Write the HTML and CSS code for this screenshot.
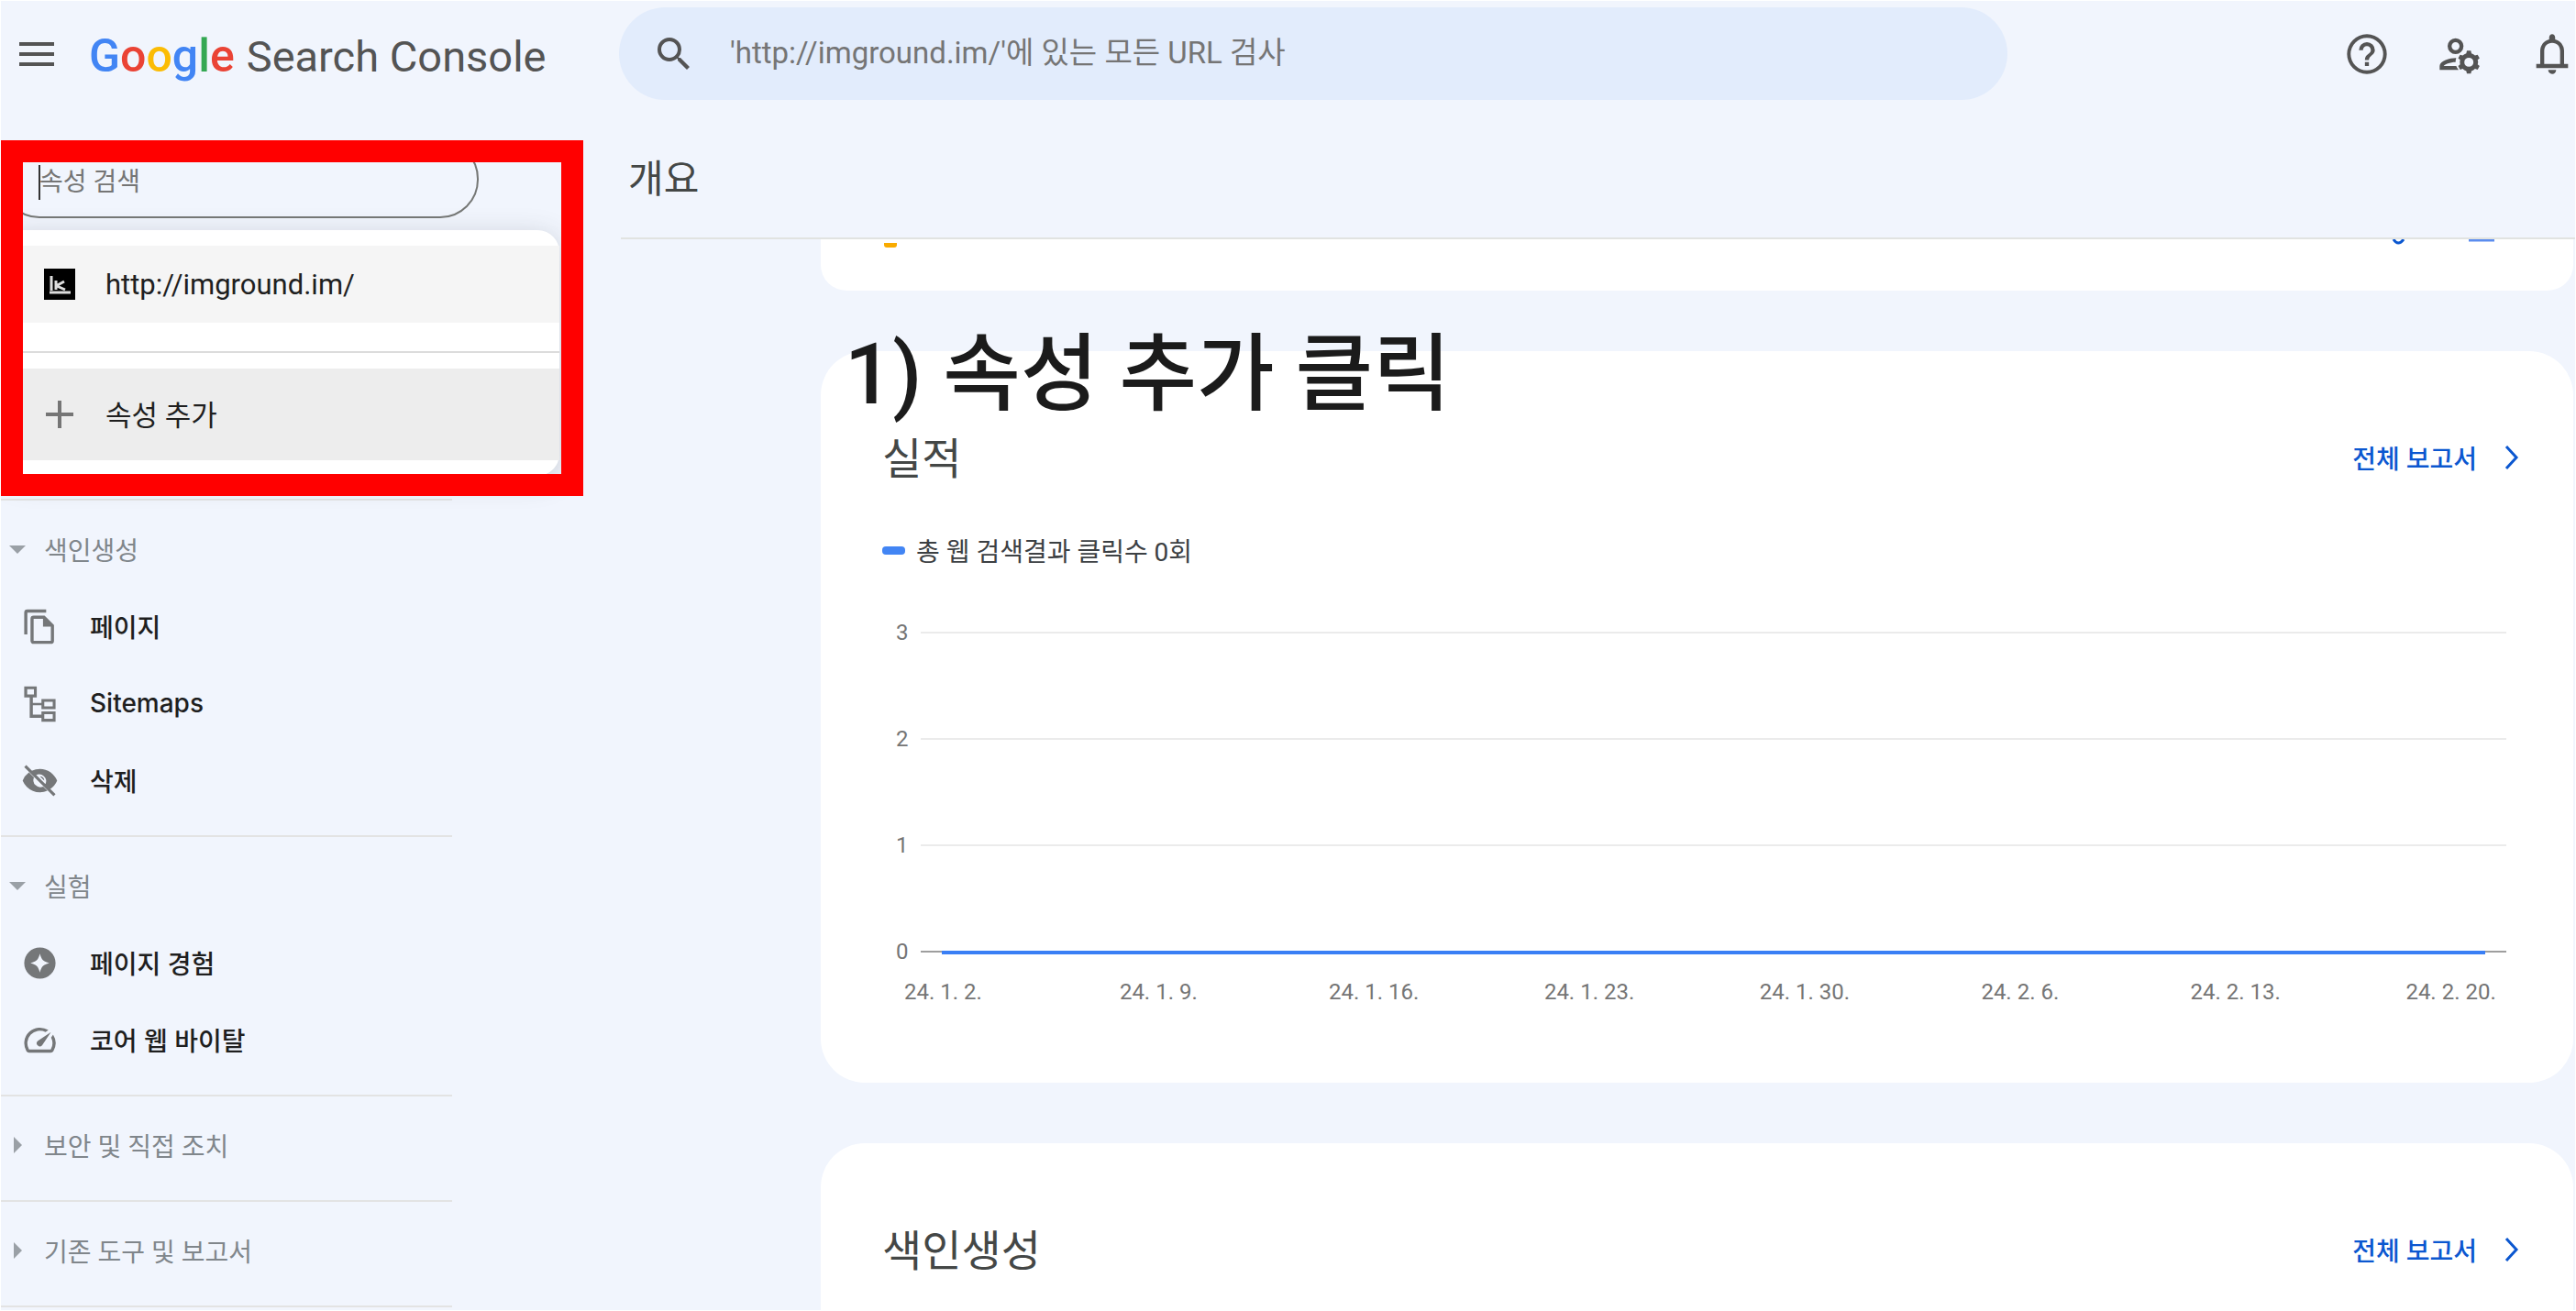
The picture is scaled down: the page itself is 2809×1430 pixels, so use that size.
FILE: index.html
```html
<!DOCTYPE html>
<html lang="ko">
<head>
  <meta charset="UTF-8" />
  <meta name="viewport" content="width=device-width, initial-scale=1.0"/>
  <title>Google Search Console</title>
  <link rel="stylesheet" href="styles.css">
</head>
<body>

<header>
  <button class="menu-btn" aria-label="메뉴">
    <svg viewBox="0 0 38 26"><path d="M0 2h38M0 13h38M0 24h38"/></svg>
  </button>
  <a class="logo" href="#"><span class="google"><span class="blue">G</span><span class="red">o</span><span class="yellow">o</span><span class="blue">g</span><span class="green">l</span><span class="red">e</span></span> <span class="product">Search Console</span></a>
  <div class="search">
    <svg class="icon" viewBox="0 0 24 24"><path d="M15.5 14h-.79l-.28-.27A6.47 6.47 0 0 0 16 9.5 6.5 6.5 0 1 0 9.5 16c1.61 0 3.09-.59 4.23-1.57l.27.28v.79l5 4.99L20.49 19l-4.99-5zm-6 0C7.01 14 5 11.99 5 9.5S7.01 5 9.5 5 14 7.01 14 9.5 11.99 14 9.5 14z"/></svg>
    <input type="text" aria-label="URL 검사" placeholder="'http://imground.im/'에 있는 모든 URL 검사">
  </div>
  <div class="actions">
    <button aria-label="도움말">
      <svg class="icon" viewBox="0 0 24 24"><path d="M11 18h2v-2h-2v2zm1-16a10 10 0 1 0 0 20 10 10 0 0 0 0-20zm0 18.2a8.2 8.2 0 1 1 0-16.4 8.2 8.2 0 0 1 0 16.4zM12 6a4 4 0 0 0-4 4h2a2 2 0 1 1 4 0c0 2-3 1.75-3 5h2c0-2.25 3-2.5 3-5a4 4 0 0 0-4-4z"/></svg>
    </button>
    <button aria-label="사용자 관리">
      <svg class="icon" viewBox="0 0 24 24">
        <path d="M10 4a4 4 0 1 0 0 8 4 4 0 0 0 0-8zm0 6a2 2 0 1 1 0-4 2 2 0 0 1 0 4zM4 18c.22-.72 3.31-2 6-2 0-.7.13-1.37.35-1.99C7.62 13.91 2 15.27 2 18v2h9.54a6 6 0 0 1-1.19-2H4z"/>
        <path d="M21.1 17.2c.3-.6.3-1.6 0-2.3l1-.8-1-1.8-1.3.4a3.600 3.600 0 0 0-1.800-1.100L17.700 10.300h-2l-.3 1.300c-.7.2-1.300.6-1.800 1.100l-1.300-.4-1 1.800 1 .8c-.2.8-.2 1.600 0 2.300l-1 .8 1 1.800 1.300-.4c.5.5 1.100.9 1.800 1.100l.3 1.300h2l.3-1.300c.7-.2 1.300-.6 1.800-1.100l1.300.4 1-1.800zm-4.400 1.200a2.300 2.300 0 1 1 0-4.600 2.300 2.300 0 0 1 0 4.600z" fill-rule="evenodd"/>
      </svg>
    </button>
    <button aria-label="알림">
      <svg class="icon" viewBox="0 0 24 24"><path d="M12 22a2 2 0 0 0 2-2h-4c0 1.100.9 2 2 2zm6-5v-6.500c0-2.900-1.800-5.200-4.500-5.900V3.700c0-.9-.7-1.700-1.500-1.700s-1.500.8-1.500 1.700v.9C7.800 5.300 6 7.600 6 10.500V17H4v2h16v-2h-2zM8 17v-6.500C8 8 9.500 6.300 12 6.300s4 1.700 4 4.200V17H8z"/></svg>
    </button>
  </div>
</header>

<div class="layout">
  <aside>
    <div class="picker">
      <div class="picker-input">
        <input type="text" aria-label="속성 검색" placeholder="속성 검색">
      </div>
      <div class="picker-menu">
        <button class="property">
          <svg viewBox="0 0 34 34"><rect width="34" height="34" fill="#000"/><path d="M8 8v16M13 13v10M13 19l9-5M14 19l9 4M6 26h23" fill="none" stroke="#ddd" stroke-width="3"/></svg>
          http://imground.im/
        </button>
        <button class="property add">
          <svg viewBox="0 0 34 34"><path d="M17 2v30M2 17h30" stroke="#757575" stroke-width="4"/></svg>
          <span>속성 추가</span>
        </button>
      </div>
      <div class="red-frame"></div>
    </div>

    <nav>
      <div class="group">
        <button class="group-title"><svg viewBox="0 0 18 18"><path d="M0 5h18l-9 9z"/></svg>색인생성</button>
        <a href="#"><svg class="icon" viewBox="0 0 24 24"><path d="M16 1H4a2 2 0 0 0-2 2v14h2V3h12V1zm-1 4H8a2 2 0 0 0-1.990 2L6 21c0 1.100.89 2 1.990 2H19a2 2 0 0 0 2-2V11l-6-6zM8 21V7h6v5h5v9H8z"/></svg>페이지</a>
        <a href="#"><svg class="icon" viewBox="0 0 24 24"><path d="M2 1h8v7H7.500v3.500H13V9h9v6.500h-9V13H7.500v6H13v-2h9v6.500h-9V21H5.500V8H2zM3.900 2.800v3.400h4.300V2.800zM14.800 10.800v3h5.400v-3zM14.800 18.700v3h5.400v-3z" fill-rule="evenodd"/></svg>Sitemaps</a>
        <a href="#"><svg class="icon" viewBox="0 0 24 24"><path d="M12 4.500c5 0 9.270 3.110 11 7.500a11.800 11.800 0 0 1-4.500 5.400l-3-3a4.500 4.500 0 0 0-6-6L6.800 5.700A12 12 0 0 1 12 4.500zM5 6.700 8.200 9.900a4.500 4.500 0 0 0 5.900 5.900l2.700 2.700A12 12 0 0 1 1 12a11.800 11.800 0 0 1 4-5.300zM2 3.300 3.300 2 22 20.700 20.700 22zM12 9.200a2.800 2.800 0 0 1 2.800 2.800z"/></svg>삭제</a>
      </div>
      <div class="group">
        <button class="group-title"><svg viewBox="0 0 18 18"><path d="M0 5h18l-9 9z"/></svg>실험</button>
        <a href="#"><svg class="icon" viewBox="0 0 24 24"><path d="M12 2a10 10 0 1 0 0 20 10 10 0 0 0 0-20zm0 16c-1-3.800-2.200-5-6-6 3.800-1 5-2.200 6-6 1 3.800 2.200 5 6 6-3.800 1-5 2.200-6 6z" fill-rule="evenodd"/></svg>페이지 경험</a>
        <a href="#"><svg class="icon" viewBox="0 0 24 24"><path d="m20.380 8.570-1.230 1.850a8 8 0 0 1-.22 7.580H5.070A8 8 0 0 1 15.580 6.850l1.850-1.230A10 10 0 0 0 3.350 19a2 2 0 0 0 1.720 1h13.850a2 2 0 0 0 1.740-1 10 10 0 0 0-.27-10.440zM10.590 15.410a2 2 0 0 0 2.830 0l5.660-8.490-8.490 5.660a2 2 0 0 0 0 2.830z"/></svg>코어 웹 바이탈</a>
      </div>
      <div class="group">
        <button class="group-title"><svg viewBox="0 0 18 18"><path d="M5 0v18l9-9z"/></svg>보안 및 직접 조치</button>
      </div>
      <div class="group">
        <button class="group-title"><svg viewBox="0 0 18 18"><path d="M5 0v18l9-9z"/></svg>기존 도구 및 보고서</button>
      </div>
    </nav>
  </aside>

  <main>
    <h1>개요</h1>
    <div class="cards">
      <section class="card card-top">
        <svg class="warn" viewBox="0 0 14 6"><path d="M0 0h14v2q0 3-3 3H3Q0 5 0 2z" fill="#f9ab00"/></svg>
        <svg class="more" viewBox="0 0 112 8"><path d="M2 0q5 8 11 0" fill="none" stroke="#0b57d0" stroke-width="3"/><path d="M84 1h28" stroke="#5b8def" stroke-width="3"/></svg>
      </section>

      <section class="card">
        <div class="note">1) 속성 추가 클릭</div>
        <div class="card-head">
          <h2>실적</h2>
          <a href="#">전체 보고서 <svg viewBox="0 0 16 28"><path d="m2 2 11 12L2 26"/></svg></a>
        </div>
        <div class="legend">총 웹 검색결과 클릭수 0회</div>
        <div class="plot">
          <div class="tick"><span>3</span></div>
          <div class="tick"><span>2</span></div>
          <div class="tick"><span>1</span></div>
          <div class="tick zero"><span>0</span></div>
        </div>
        <div class="dates">
          <span>24. 1. 2.</span>
          <span>24. 1. 9.</span>
          <span>24. 1. 16.</span>
          <span>24. 1. 23.</span>
          <span>24. 1. 30.</span>
          <span>24. 2. 6.</span>
          <span>24. 2. 13.</span>
          <span>24. 2. 20.</span>
        </div>
      </section>

      <section class="card">
        <div class="card-head">
          <h2>색인생성</h2>
          <a href="#">전체 보고서 <svg viewBox="0 0 16 28"><path d="m2 2 11 12L2 26"/></svg></a>
        </div>
      </section>
    </div>
  </main>
</div>

</body>
</html>
```
FILE: styles.css
```css
* {
  box-sizing: border-box;
}
body {
  margin: 0;
  height: 100vh;
  overflow: hidden;
  display: flex;
  flex-direction: column;
  border: 1px solid #fff;
  background-color: #f1f5fd;
  color: #1f1f1f;
  font-family: Roboto, "Noto Sans CJK KR", sans-serif;
  font-size: 28px;
}
a {
  color: inherit;
  text-decoration: none;
}
button {
  border: none;
  padding: 0;
  background: none;
  color: inherit;
  font: inherit;
  text-align: left;
}
input {
  border: none;
  outline: none;
  background: none;
  font: inherit;
}
input::placeholder {
  color: #757575;
  opacity: 1;
}
svg {
  display: block;
  flex: none;
}
.icon {
  fill: currentColor;
}

/* header */
header {
  display: flex;
  align-items: center;
  height: 115px;
  flex: none;
  color: #545454;
}
.menu-btn {
  margin: 0 38px 0 20px;
}
.menu-btn svg {
  width: 38px;
  height: 26px;
  stroke: currentColor;
  stroke-width: 4;
}
.logo {
  display: flex;
  align-items: baseline;
  gap: 13px;
  width: 578px;
  padding-top: 5px;
  white-space: nowrap;
  font-size: 47px;
}
.google {
  font-size: 50px;
  font-weight: 500;
}
.blue { color: #4285f4; }
.red { color: #ea4335; }
.yellow { color: #fbbc05; }
.green { color: #34a853; }
.search {
  display: flex;
  align-items: center;
  flex: 0 1 1514px;
  height: 101px;
  padding: 0 36px;
  gap: 37px;
  border-radius: 51px;
  background-color: #e2ecfc;
}
.search .icon {
  width: 48px;
  height: 48px;
}
.search input {
  flex: 1;
  min-width: 0;
  padding: 0 0 3px;
  font-size: 33px;
}
.actions {
  display: flex;
  gap: 49px;
  margin: 0 -1px 0 auto;
}
.actions .icon {
  width: 52px;
  height: 52px;
}

.layout {
  display: flex;
  flex: 1;
  min-height: 0;
}

/* sidebar */
aside {
  flex: none;
  width: 676px;
}
.picker {
  position: relative;
  width: 635px;
  height: 388px;
  margin-top: 37px;
  margin-bottom: 3px;
}
.picker-input {
  position: relative;
  width: 521px;
  height: 85px;
  border: 2px solid #757775;
  border-radius: 42px;
}
.picker-input input {
  width: 100%;
  height: 100%;
  padding: 6px 40px 0;
  font-size: 28px;
}
.picker-input::before {
  content: "";
  position: absolute;
  left: 39px;
  top: 25px;
  width: 2px;
  height: 38px;
  background-color: #333;
}
.picker-menu {
  width: 609px;
  margin-top: 13px;
  padding: 17px 0;
  border-radius: 24px;
  background-color: #fff;
  box-shadow: 0 6px 30px rgba(60, 64, 67, 0.22);
}
.property {
  display: flex;
  align-items: center;
  gap: 33px;
  width: 100%;
  height: 84px;
  padding-left: 47px;
  background-color: #f5f5f5;
  font-size: 31px;
}
.property svg {
  width: 34px;
  height: 34px;
}
.property.add {
  height: 100px;
  margin-top: 50px;
  background-color: #ededed;
  position: relative;
}
.property.add span {
  padding-bottom: 4px;
}
.property.add::before {
  content: "";
  position: absolute;
  left: 0;
  right: 0;
  top: -19px;
  height: 2px;
  background-color: #dcdcdc;
}
.red-frame {
  position: absolute;
  inset: 0;
  border: 24px solid #f00;
}
.group {
  width: 492px;
  padding: 11px 0 18px;
  border-top: 2px solid #e3e3e3;
}
.group:last-child {
  border-bottom: 2px solid #e3e3e3;
}
.group-title {
  display: flex;
  align-items: center;
  gap: 20px;
  height: 84px;
  padding-left: 9px;
  color: #80868b;
}
.group-title svg {
  width: 18px;
  height: 18px;
  fill: #9aa0a6;
}
.group a {
  display: flex;
  align-items: center;
  gap: 34px;
  height: 84px;
  padding-left: 22px;
  font-family: Inter, "Noto Sans CJK KR", sans-serif;
  font-weight: 500;
}
.group .icon {
  width: 41px;
  height: 41px;
  color: #757779;
}

/* main */
main {
  flex: 1;
  min-width: 0;
  display: flex;
  flex-direction: column;
}
h1, h2 {
  margin: 0;
  font-weight: 400;
  color: #444746;
}
h1 {
  height: 145px;
  padding: 50px 0 0 8px;
  border-bottom: 2px solid #e1e3e1;
  font-size: 42px;
  line-height: 60px;
  flex: none;
}
.cards {
  display: flex;
  flex-direction: column;
  gap: 66px;
  flex: 1;
  min-height: 0;
  padding: 0 2px 0 218px;
}
.card {
  position: relative;
  flex: none;
  padding: 66px 0 81px;
  border-radius: 48px;
  background-color: #fff;
}
.card:last-child {
  flex: 1;
  padding-bottom: 0;
  border-radius: 48px 48px 0 0;
}
.card-top {
  display: flex;
  justify-content: space-between;
  height: 56px;
  padding: 0 86px 0 69px;
  border-radius: 0 0 28px 28px;
}
.warn {
  width: 14px;
  height: 6px;
  margin-top: 4px;
}
.more {
  width: 112px;
  height: 8px;
}
.note {
  position: absolute;
  left: 26px;
  top: -46px;
  color: #1b1b1b;
  font-size: 92px;
  font-weight: 500;
  line-height: 144px;
  white-space: nowrap;
}
.card-head {
  display: flex;
  align-items: center;
  justify-content: space-between;
  height: 100px;
  padding: 0 59px 0 67px;
}
h2 {
  padding-bottom: 6px;
  font-size: 47px;
}
.card-head a {
  display: flex;
  align-items: center;
  gap: 30px;
  color: #0b57d0;
  font-weight: 500;
}
.card-head a svg {
  width: 16px;
  height: 28px;
  fill: none;
  stroke: currentColor;
  stroke-width: 3;
}
.legend {
  display: flex;
  align-items: center;
  gap: 12px;
  height: 40px;
  margin: 31px 0 12px;
  padding-left: 67px;
  color: #3c4043;
}
.legend::before {
  content: "";
  width: 25px;
  height: 9px;
  border-radius: 4px;
  background-color: #4285f4;
}
.plot {
  padding: 0 73px 0 82px;
  color: #757575;
  font-size: 24px;
}
.tick {
  display: flex;
  align-items: center;
  gap: 13px;
  height: 116px;
  position: relative;
}
.tick::before {
  content: "";
  order: 1;
  flex: 1;
  height: 2px;
  background-color: #ebebeb;
}
.tick.zero::before {
  background-color: #9e9e9e;
}
.tick.zero::after {
  content: "";
  position: absolute;
  left: 50px;
  right: 23px;
  top: 57px;
  height: 4px;
  background-color: #3a7ff5;
}
.dates {
  display: grid;
  grid-template-columns: repeat(8, 1fr);
  margin: -32px 16px 0 16px;
  color: #757575;
  font-size: 24px;
  line-height: 36px;
  text-align: center;
}
```
